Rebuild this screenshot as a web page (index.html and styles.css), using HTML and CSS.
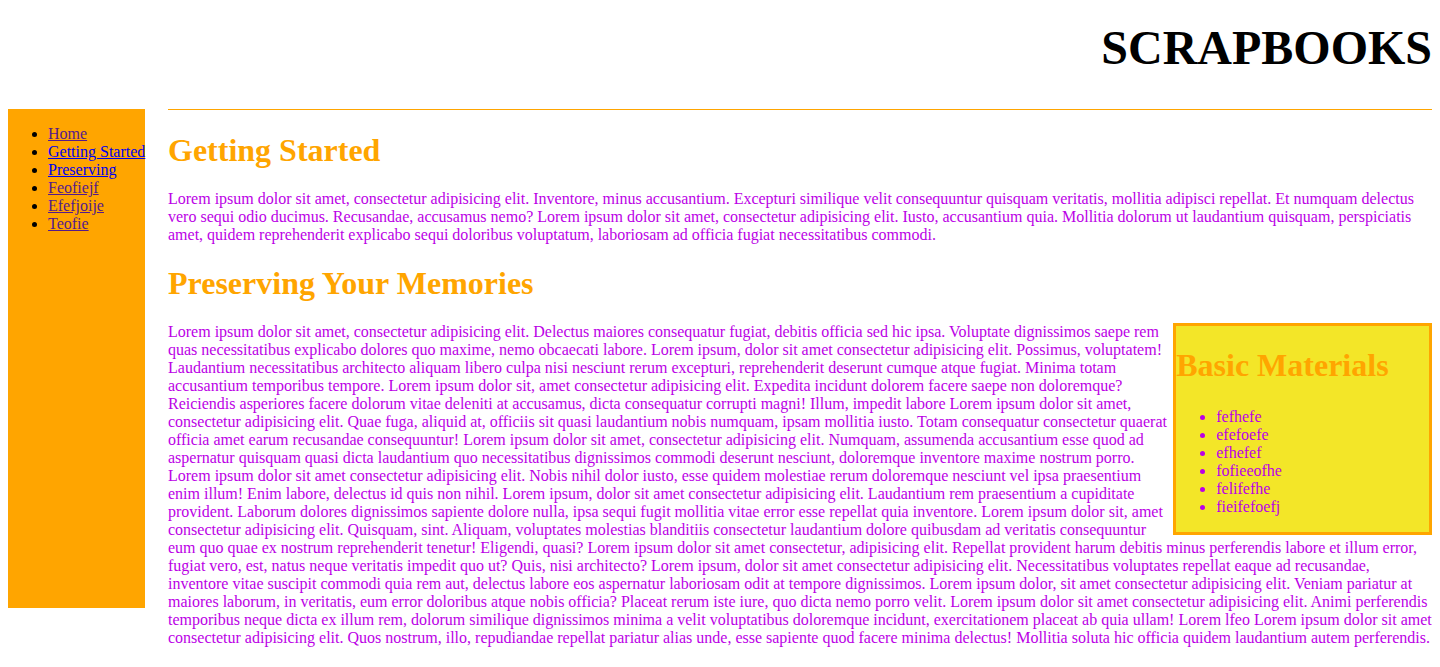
FILE: index.html
```html
<!DOCTYPE html>
<html lang="en">
<head>
<meta charset="utf-8">
<title>Scrapbooks</title>
<link rel="stylesheet" href="styles.css">
</head>
<body>
<header class="site-header">
  <h1 class="site-title">SCRAPBOOKS</h1>
</header>
<div class="layout">
  <nav class="sidebar">
    <ul class="nav-list">
      <li><a class="visited" href="#">Home</a></li>
      <li><a href="#">Getting Started</a></li>
      <li><a href="#">Preserving</a></li>
      <li><a class="visited" href="#">Feofiejf</a></li>
      <li><a class="visited" href="#">Efefjoije</a></li>
      <li><a class="visited" href="#">Teofie</a></li>
    </ul>
  </nav>
  <main class="content">
    <hr class="rule">
    <h2 class="section-title">Getting Started</h2>
    <p class="text">Lorem ipsum dolor sit amet, consectetur adipisicing elit. Inventore, minus accusantium. Excepturi similique velit consequuntur quisquam veritatis, mollitia adipisci repellat. Et numquam delectus vero sequi odio ducimus. Recusandae, accusamus nemo? Lorem ipsum dolor sit amet, consectetur adipisicing elit. Iusto, accusantium quia. Mollitia dolorum ut laudantium quisquam, perspiciatis amet, quidem reprehenderit explicabo sequi doloribus voluptatum, laboriosam ad officia fugiat necessitatibus commodi.</p>
    <h2 class="section-title">Preserving Your Memories</h2>
    <aside class="materials">
      <h2 class="section-title materials-title">Basic Materials</h2>
      <ul class="materials-list">
        <li>fefhefe</li>
        <li>efefoefe</li>
        <li>efhefef</li>
        <li>fofieeofhe</li>
        <li>felifefhe</li>
        <li>fieifefoefj</li>
      </ul>
    </aside>
    <p class="text">Lorem ipsum dolor sit amet, consectetur adipisicing elit. Delectus maiores consequatur fugiat, debitis officia sed hic ipsa. Voluptate dignissimos saepe rem quas necessitatibus explicabo dolores quo maxime, nemo obcaecati labore. Lorem ipsum, dolor sit amet consectetur adipisicing elit. Possimus, voluptatem! Laudantium necessitatibus architecto aliquam libero culpa nisi nesciunt rerum excepturi, reprehenderit deserunt cumque atque fugiat. Minima totam accusantium temporibus tempore. Lorem ipsum dolor sit, amet consectetur adipisicing elit. Expedita incidunt dolorem facere saepe non doloremque? Reiciendis asperiores facere dolorum vitae deleniti at accusamus, dicta consequatur corrupti magni! Illum, impedit labore Lorem ipsum dolor sit amet, consectetur adipisicing elit. Quae fuga, aliquid at, officiis sit quasi laudantium nobis numquam, ipsam mollitia iusto. Totam consequatur consectetur quaerat officia amet earum recusandae consequuntur! Lorem ipsum dolor sit amet, consectetur adipisicing elit. Numquam, assumenda accusantium esse quod ad aspernatur quisquam quasi dicta laudantium quo necessitatibus dignissimos commodi deserunt nesciunt, doloremque inventore maxime nostrum porro. Lorem ipsum dolor sit amet consectetur adipisicing elit. Nobis nihil dolor iusto, esse quidem molestiae rerum doloremque nesciunt vel ipsa praesentium enim illum! Enim labore, delectus id quis non nihil. Lorem ipsum, dolor sit amet consectetur adipisicing elit. Laudantium rem praesentium a cupiditate provident. Laborum dolores dignissimos sapiente dolore nulla, ipsa sequi fugit mollitia vitae error esse repellat quia inventore. Lorem ipsum dolor sit, amet consectetur adipisicing elit. Quisquam, sint. Aliquam, voluptates molestias blanditiis consectetur laudantium dolore quibusdam ad veritatis consequuntur eum quo quae ex nostrum reprehenderit tenetur! Eligendi, quasi? Lorem ipsum dolor sit amet consectetur, adipisicing elit. Repellat provident harum debitis minus perferendis labore et illum error, fugiat vero, est, natus neque veritatis impedit quo ut? Quis, nisi architecto? Lorem ipsum, dolor sit amet consectetur adipisicing elit. Necessitatibus voluptates repellat eaque ad recusandae, inventore vitae suscipit commodi quia rem aut, delectus labore eos aspernatur laboriosam odit at tempore dignissimos. Lorem ipsum dolor, sit amet consectetur adipisicing elit. Veniam pariatur at maiores laborum, in veritatis, eum error doloribus atque nobis officia? Placeat rerum iste iure, quo dicta nemo porro velit. Lorem ipsum dolor sit amet consectetur adipisicing elit. Animi perferendis temporibus neque dicta ex illum rem, dolorum similique dignissimos minima a velit voluptatibus doloremque incidunt, exercitationem placeat ab quia ullam! Lorem lfeo Lorem ipsum dolor sit amet consectetur adipisicing elit. Quos nostrum, illo, repudiandae repellat pariatur alias unde, esse sapiente quod facere minima delectus! Mollitia soluta hic officia quidem laudantium autem perferendis.</p>
  </main>
</div>
</body>
</html>
```

FILE: styles.css
```css
body {
  margin: 8px;
  font-family: "Liberation Serif", "Times New Roman", serif;
  font-size: 16px;
  line-height: 18px;
  color: #000;
  background: #fff;
}

.site-header {
  text-align: right;
}

.site-title {
  font-size: 48px;
  line-height: 55px;
  font-weight: bold;
  margin: 12px 0 34px;
}

.layout {
  display: flex;
  align-items: flex-start;
}

.sidebar {
  flex: 0 0 137px;
  width: 137px;
  height: 499px;
  background: #ffa500;
}

.nav-list {
  margin: 16px 0;
  padding-left: 40px;
  white-space: nowrap;
}

.nav-list a {
  color: #0000ee;
}

.nav-list a.visited {
  color: #551a8b;
}

.content {
  flex: 1 1 auto;
  margin-left: 23px;
  min-width: 0;
}

.rule {
  margin: 0 0 22px;
  border: 0;
  border-top: 1px solid #ffa500;
  height: 0;
}

.section-title {
  color: #ffa500;
  font-size: 32px;
  line-height: 37px;
  font-weight: bold;
  margin: 21px 0;
}

.text {
  color: #bb00e6;
  margin: 16px 0;
}

.materials {
  float: right;
  width: 20%;
  background: #f3e628;
  border: 3px solid #ffa500;
  margin-left: 6px;
}

.materials-title {
  margin: 21px 0 24px;
}

.materials-list {
  color: #bb00e6;
  margin: 16px 0;
  padding-left: 40px;
}
```
